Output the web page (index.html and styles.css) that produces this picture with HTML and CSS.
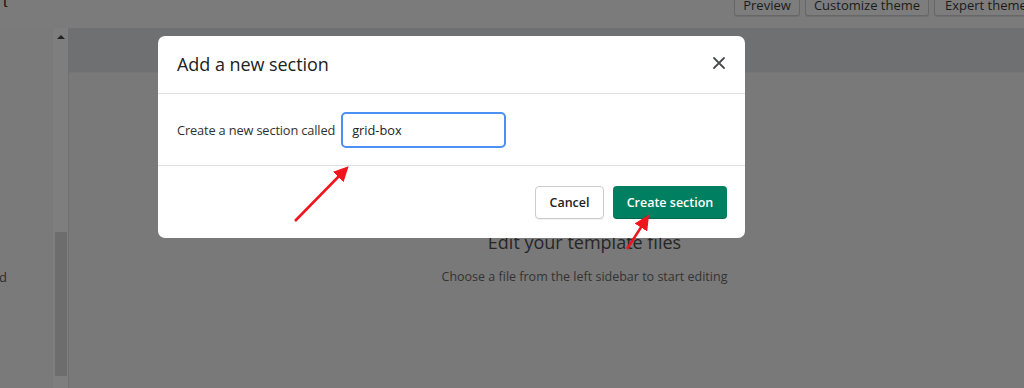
FILE: index.html
```html
<!DOCTYPE html>
<html>
<head>
<meta charset="utf-8">
<link rel="stylesheet" href="styles.css">
</head>
<body>
<div class="page">
  <header class="topbar">
    <span class="cut-t">t</span>
    <div class="top-actions">
      <span class="tbtn tbtn-preview">Preview</span>
      <span class="tbtn tbtn-custom">Customize theme</span>
      <span class="tbtn tbtn-expert">Expert theme</span>
    </div>
  </header>
  <div class="workspace">
    <aside class="sidebar">
      <span class="cut-d">d</span>
    </aside>
    <div class="scrollcol">
      <span class="scroll-up"></span>
      <span class="scroll-thumb"></span>
    </div>
    <main class="main">
      <div class="band"></div>
      <div class="empty">
        <h2 class="empty-title">Edit your template files</h2>
        <p class="empty-text">Choose a file from the left sidebar to start editing</p>
      </div>
    </main>
  </div>

  <div class="modal">
    <div class="modal-head">
      <h1 class="modal-title">Add a new section</h1>
      <svg class="close" width="14" height="14" viewBox="0 0 14 14"><path d="M2 2L12 12M12 2L2 12" stroke="#4a4c4f" stroke-width="1.8" stroke-linecap="round"/></svg>
    </div>
    <div class="modal-body">
      <label class="field-label">Create a new section called</label>
      <div class="input">grid-box</div>
    </div>
    <div class="modal-foot">
      <span class="btn btn-cancel">Cancel</span>
      <span class="btn btn-primary">Create section</span>
    </div>
  </div>

  <svg class="arrows" width="1024" height="388" viewBox="0 0 1024 388">
    <defs>
      <marker id="ah" markerWidth="6" markerHeight="6" refX="4.5" refY="3" orient="auto" markerUnits="strokeWidth">
        <path d="M0,0 L6,3 L0,6 Z" fill="#f0141c"/>
      </marker>
    </defs>
    <line x1="295" y1="221" x2="346" y2="169" stroke="#f0141c" stroke-width="2.5" marker-end="url(#ah)"/>
    <line x1="627" y1="249" x2="647" y2="218" stroke="#f0141c" stroke-width="2.5" marker-end="url(#ah)"/>
  </svg>
</div>
</body>
</html>
```

FILE: styles.css
```css
* { box-sizing: border-box; }
html, body { margin: 0; padding: 0; }
body {
  font-family: "Open Sans", "Noto Sans", "Liberation Sans", sans-serif;
  background: #7a7a7a;
  width: 1024px;
  height: 388px;
  overflow: hidden;
}
.page {
  position: relative;
  width: 1024px;
  height: 388px;
  display: flex;
  flex-direction: column;
  background: #7a7a7a;
}
.topbar {
  height: 28px;
  flex: none;
  display: flex;
  justify-content: space-between;
  align-items: flex-start;
  background: #7b7b7b;
  overflow: hidden;
}
.cut-t {
  font-family: "Liberation Serif", serif;
  font-size: 17px;
  line-height: 17px;
  margin-top: -7px;
  margin-left: 3px;
  color: #141414;
}
.top-actions {
  display: flex;
  gap: 5px;
  margin-top: -6px;
  margin-right: -10px;
}
.tbtn {
  display: flex;
  justify-content: center;
  height: 22px;
  padding-top: 1px;
  border: 1px solid #676767;
  border-radius: 3px;
  background: #7d7d7d;
  font-size: 13px;
  font-weight: 500;
  line-height: 19px;
  color: #1b1b1b;
  box-shadow: 0 1px 0 #707070;
  white-space: nowrap;
}
.tbtn-preview { width: 66px; }
.tbtn-custom { width: 124px; }
.tbtn-expert { width: 100px; justify-content: flex-start; padding-left: 10px; }
.workspace {
  flex: 1;
  display: flex;
}
.sidebar {
  width: 53px;
  flex: none;
  background: #7a7a7a;
  position: relative;
}
.cut-d {
  position: absolute;
  left: -1px;
  top: 240px;
  font-size: 13px;
  color: #2c2c2c;
}
.scrollcol {
  width: 16px;
  flex: none;
  background: #7e7e7e;
  border-right: 1px solid #707070;
  display: flex;
  flex-direction: column;
  align-items: center;
}
.scroll-up {
  margin-top: 7px;
  width: 0;
  height: 0;
  border-left: 4px solid transparent;
  border-right: 4px solid transparent;
  border-bottom: 4px solid #222;
}
.scroll-thumb {
  margin-top: 193px;
  width: 12px;
  height: 144px;
  background: #6d6d6d;
}
.main {
  flex: 1;
  background: #797979;
  display: flex;
  flex-direction: column;
}
.band {
  height: 45px;
  background: #6f7071;
  border-bottom: 1px solid #757575;
}
.empty {
  padding-left: 76px;
  display: flex;
  flex-direction: column;
  align-items: center;
  padding-top: 157px;
}
.empty-title {
  margin: 0;
  font-size: 18px;
  font-weight: 400;
  line-height: 24px;
  color: #262626;
}
.empty-text {
  margin: 14px 0 0;
  font-size: 12.5px;
  line-height: 18px;
  color: #333333;
}
.modal {
  position: absolute;
  left: 158px;
  top: 36px;
  width: 587px;
  height: 202px;
  background: #ffffff;
  border-radius: 7px;
  display: flex;
  flex-direction: column;
}
.modal-head {
  height: 58px;
  border-bottom: 1px solid #dfe1e3;
  display: flex;
  align-items: center;
  justify-content: space-between;
  padding: 0 19px 0 19px;
}
.modal-title {
  margin: 0 0 1px;
  font-size: 18px;
  font-weight: 400;
  color: #202223;
  letter-spacing: -0.05px;
}
.close { display: block; margin-top: -4px; }
.modal-body {
  height: 72px;
  border-bottom: 1px solid #dfe1e3;
  display: flex;
  align-items: center;
  padding-left: 19px;
  gap: 6px;
}
.field-label {
  font-size: 12.8px;
  color: #303133;
  letter-spacing: -0.15px;
}
.input {
  width: 165px;
  height: 36px;
  border: 2px solid #4a90f5;
  border-radius: 5px;
  padding: 0 9px;
  display: flex;
  align-items: center;
  font-size: 12.8px;
  color: #202223;
}
.modal-foot {
  flex: 1;
  display: flex;
  justify-content: flex-end;
  align-items: flex-start;
  padding: 20px 18px 0 0;
  gap: 9px;
}
.btn {
  height: 33px;
  border-radius: 4px;
  display: flex;
  align-items: center;
  justify-content: center;
  font-size: 12.5px;
  font-weight: 600;
}
.btn-cancel {
  width: 69px;
  background: #fff;
  border: 1px solid #c9cccf;
  color: #202223;
  box-shadow: 0 1px 0 rgba(0,0,0,0.05);
}
.btn-primary {
  width: 114px;
  background: #008060;
  color: #ffffff;
  box-shadow: inset 0 -1px 0 rgba(0,0,0,0.2);
}
.arrows {
  position: absolute;
  left: 0;
  top: 0;
  pointer-events: none;
}
```
